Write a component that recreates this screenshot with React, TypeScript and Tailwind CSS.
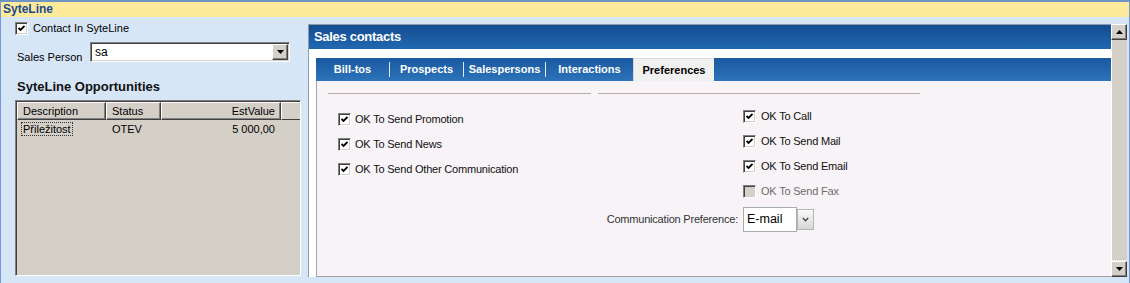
import React from 'react';

const font = "font-['Liberation_Sans',_Arial,_sans-serif]";

function CheckBox({ disabled = false }: { disabled?: boolean }) {
  return (
    <span
      className={`flex h-[13px] w-[13px] shrink-0 items-center justify-center border border-b-white border-l-[#808080] border-r-white border-t-[#808080] shadow-[inset_1px_1px_0_#404040,inset_-1px_-1px_0_#d4d0c8] ${
        disabled ? 'bg-[#d4d0c8]' : 'bg-white'
      }`}
    >
      {!disabled && (
        <svg width="7" height="7" viewBox="0 0 7 7">
          <polyline points="0.5,3 2.5,5 6.5,1" fill="none" stroke="#000" strokeWidth="1.8" />
        </svg>
      )}
    </span>
  );
}

function Triangle({ up = false }: { up?: boolean }) {
  return (
    <svg width="7" height="4" viewBox="0 0 7 4">
      <polygon points={up ? '0,4 7,4 3.5,0' : '0,0 7,0 3.5,4'} fill="#000" />
    </svg>
  );
}

const tabs = [
  { title: 'Bill-tos', width: 'w-[73px]' },
  { title: 'Prospects', width: 'w-[73px]' },
  { title: 'Salespersons', width: 'w-[81px]' },
  { title: 'Interactions', width: 'w-[87px]' },
];

const leftChecks = ['OK To Send Promotion', 'OK To Send News', 'OK To Send Other Communication'];
const rightChecks = [
  { label: 'OK To Call', disabled: false },
  { label: 'OK To Send Mail', disabled: false },
  { label: 'OK To Send Email', disabled: false },
  { label: 'OK To Send Fax', disabled: true },
];

export default function App() {
  return (
    <div
      className={`${font} flex h-[283px] w-[1130px] flex-col overflow-hidden border-l border-r border-t-2 border-l-[#6d9ad6] border-r-[#6d9ad6] border-t-[#6f93c2] bg-[#d6e6f6] text-black`}
    >
      {/* title bar */}
      <div className="h-[15px] shrink-0 bg-[#feea9b] pl-[2px] text-[12px] font-bold leading-[15px] text-[#1a4b91]">
        SyteLine
      </div>

      <div className="flex flex-1">
        {/* Left panel */}
        <div className="w-[307px] shrink-0">
          <div className="ml-[14px] mt-[5px] flex items-center gap-[5px] text-[11px] leading-[13px]">
            <CheckBox />
            <span>Contact In SyteLine</span>
          </div>

          <div className="mt-[7px] flex items-end">
            <span className="mb-[-2px] ml-[16px] w-[73px] text-[11px] leading-[14px]">Sales Person</span>
            <div className="flex h-[20px] w-[200px] items-center border border-b-white border-l-[#808080] border-r-white border-t-[#808080] bg-white shadow-[inset_1px_1px_0_#404040,inset_-1px_-1px_0_#d4d0c8]">
              <span className="flex-1 pl-[4px] text-[12px] leading-[16px]">sa</span>
              <span className="mr-[1px] flex h-[16px] w-[16px] items-center justify-center border border-b-[#404040] border-l-white border-r-[#404040] border-t-white bg-[#d4d0c8] shadow-[inset_-1px_-1px_0_#808080]">
                <Triangle />
              </span>
            </div>
          </div>

          <div className="ml-[16px] mt-[17px] text-[13px] font-bold leading-[16px] text-[#111]">
            SyteLine Opportunities
          </div>

          {/* grid */}
          <div className="ml-[14px] mt-[5px] h-[176px] w-[286px] border border-b-white border-l-[#808080] border-r-white border-t-[#808080] bg-[#d4d0c8] shadow-[inset_1px_1px_0_#404040] pl-px pt-px text-[11px]">
            <div className="flex h-[18px]">
              <div className="w-[89px] border border-b-[#404040] border-l-white border-r-[#404040] border-t-white pl-[5px] leading-[16px] shadow-[inset_-1px_-1px_0_#808080]">
                Description
              </div>
              <div className="w-[55px] border border-b-[#404040] border-l-white border-r-[#404040] border-t-white pl-[5px] leading-[16px] shadow-[inset_-1px_-1px_0_#808080]">
                Status
              </div>
              <div className="w-[120px] border border-b-[#404040] border-l-white border-r-[#404040] border-t-white pr-[5px] text-right leading-[16px] shadow-[inset_-1px_-1px_0_#808080]">
                EstValue
              </div>
              <div className="flex-1 border border-b-[#404040] border-l-white border-r-0 border-t-white" />
            </div>
            <div className="flex h-[18px] items-center">
              <div className="w-[89px] pl-[4px]">
                <span className="border border-dotted border-[#333] px-px leading-[14px]">Přiležitost</span>
              </div>
              <div className="w-[55px] pl-[6px]">OTEV</div>
              <div className="w-[120px] pr-[6px] text-right">5 000,00</div>
            </div>
          </div>
        </div>

        {/* Right panel */}
        <div className="mt-[7px] flex h-[253px]">
          <div className="flex w-[803px] flex-col border-l border-t border-[#8d9aa8] bg-white">
            <div className="h-[24px] shrink-0 bg-gradient-to-b from-[#154c8f] to-[#2168b2] pl-[5px] text-[13px] font-bold leading-[24px] tracking-[-0.3px] text-white">
              Sales contacts
            </div>
            <div className="flex flex-1 flex-col pl-[7px] pt-[9px]">
              {/* tabs */}
              <div className="flex h-[23px] shrink-0 items-stretch bg-gradient-to-b from-[#1a58a0] to-[#2c74b9] text-[11px] font-bold text-white">
                {tabs.map((tab) => (
                  <React.Fragment key={tab.title}>
                    <div className={`${tab.width} flex items-center justify-center`}>{tab.title}</div>
                    {tab.title !== 'Interactions' && <div className="my-[4px] w-px bg-[#dfe8f3]" />}
                  </React.Fragment>
                ))}
                <div className="flex w-[81px] items-center justify-center border-l border-t border-l-[#d6d6d6] border-t-[#dcdcdc] bg-[#f0f0f0] text-black">
                  Preferences
                </div>
              </div>

              {/* content */}
              <div className="flex-1 border-b border-l border-[#a3a3a3] bg-[#f7f3f7] pt-[12px] text-[11px] tracking-[-0.2px] text-[#111]">
                <div className="flex gap-[7px] pl-[11px]">
                  <div className="h-px w-[263px] bg-[#b8aaa6]" />
                  <div className="h-px w-[322px] bg-[#b8aaa6]" />
                </div>
                <div className="flex">
                  <div className="w-[283px] pl-[21px] pt-[13px]">
                    {leftChecks.map((label) => (
                      <div key={label} className="flex h-[25px] items-center gap-[4px]">
                        <CheckBox />
                        <span>{label}</span>
                      </div>
                    ))}
                  </div>
                  <div className="grid grid-cols-[138px_auto] gap-x-[5px] pt-[10px]">
                    {rightChecks.map((item) => (
                      <div key={item.label} className="col-start-2 flex h-[25px] items-center gap-[5px]">
                        <CheckBox disabled={item.disabled} />
                        <span className={item.disabled ? 'text-[#6e6e6e]' : ''}>{item.label}</span>
                      </div>
                    ))}
                    <div className="mt-[3px] flex items-center justify-end text-[#333]">Communication Preference:</div>
                    <div className="mt-[3px] flex h-[25px] items-center">
                      <div className="flex h-[25px] w-[54px] items-center border border-[#a7adb5] bg-white pl-[3px] text-[12.5px] tracking-normal text-black">
                        E-mail
                      </div>
                      <div className="flex h-[21px] w-[17px] items-center justify-center border border-[#b5b5b5] bg-gradient-to-b from-[#fafafa] to-[#d6d6d6]">
                        <svg width="7" height="5" viewBox="0 0 7 5">
                          <polyline points="0.8,1 3.5,3.7 6.2,1" fill="none" stroke="#444" strokeWidth="1.4" />
                        </svg>
                      </div>
                    </div>
                  </div>
                </div>
              </div>
            </div>
          </div>

          {/* scrollbar */}
          <div className="flex w-[16px] flex-col bg-[#d4d0c8]">
            <div className="flex h-[16px] items-center justify-center border border-b-[#404040] border-l-white border-r-[#404040] border-t-white shadow-[inset_-1px_-1px_0_#808080]">
              <Triangle up />
            </div>
            <div className="flex-1 border-l border-l-white" />
            <div className="h-px border-t border-dotted border-[#fff]" />
            <div className="flex h-[16px] items-center justify-center border border-b-[#404040] border-l-white border-r-[#404040] border-t-white shadow-[inset_-1px_-1px_0_#808080]">
              <Triangle />
            </div>
          </div>
        </div>
      </div>
    </div>
  );
}
